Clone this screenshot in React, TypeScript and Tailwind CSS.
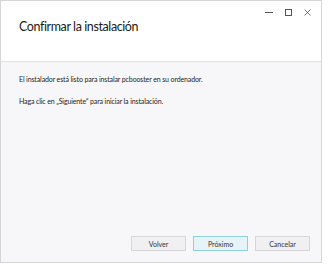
export default function App() {
  const font = { fontFamily: 'Lato, "Noto Sans", sans-serif' };

  return (
    <div className="w-[328px] h-[264px] bg-white" style={font}>
      <div className="w-[322px] h-[263px] border border-[#d6d6d6] flex flex-col bg-[#f7f7f9]">
        <div className="h-[61px] bg-white border-b border-[#e2e2e2] relative shrink-0">
          <div className="absolute top-[7px] right-[10px] flex items-center gap-[12px] text-[#555]">
            <svg width="8" height="8" viewBox="0 0 8 8">
              <path d="M0 4.5h8" stroke="currentColor" strokeWidth="1" />
            </svg>
            <svg width="7" height="7" viewBox="0 0 7 7">
              <rect x="0.5" y="0.5" width="6" height="6" fill="none" stroke="currentColor" strokeWidth="1" />
            </svg>
            <svg width="7" height="7" viewBox="0 0 7 7">
              <path d="M0.5 0.5l6 6M6.5 0.5l-6 6" stroke="currentColor" strokeWidth="0.8" />
            </svg>
          </div>
          <div className="pl-[18px] pt-[17px] text-[12.5px] leading-[18px] tracking-[-0.4px] text-[#1a1a1a]">
            Confirmar la instalación
          </div>
        </div>
        <div className="flex-1 flex flex-col px-[18px] pt-[12px] text-[7px] leading-[10px] tracking-[-0.12px] text-[#222]">
          <p>El instalador está listo para instalar pcbooster en su ordenador.</p>
          <p className="mt-[12px]">Haga clic en „Siguiente“ para iniciar la instalación.</p>
          <div className="mt-auto mb-[11px] flex justify-end gap-[7px] -mr-[7px] tracking-normal">
            <button className="w-[55px] h-[15px] bg-[#f0f0f2] border border-[#d6d6d8] text-[7px] text-[#333]">Volver</button>
            <button className="w-[55px] h-[15px] bg-[#e6f4f7] border border-[#8fd0dc] text-[7px] text-[#333]">Próximo</button>
            <button className="w-[55px] h-[15px] bg-[#f0f0f2] border border-[#d6d6d8] text-[7px] text-[#333]">Cancelar</button>
          </div>
        </div>
      </div>
    </div>
  );
}
